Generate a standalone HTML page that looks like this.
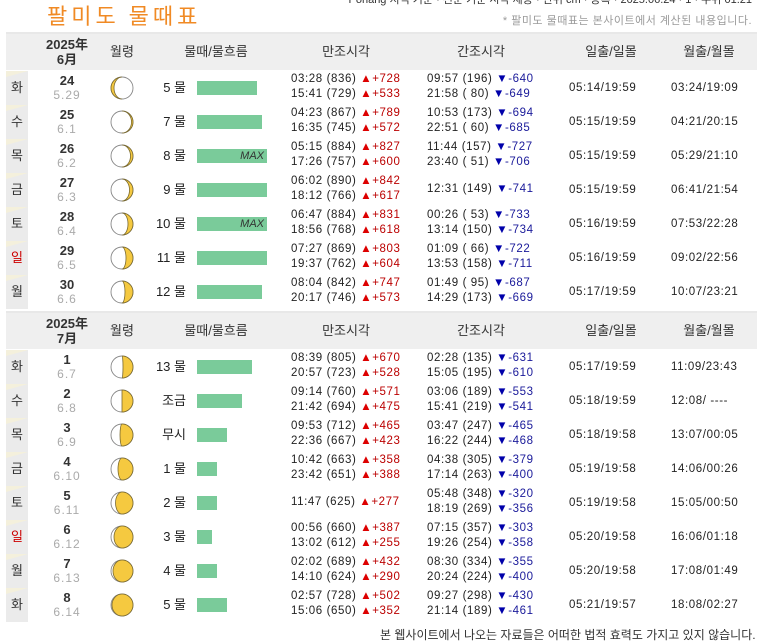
<!DOCTYPE html>
<html><head><meta charset="utf-8"><style>
*{margin:0;padding:0;box-sizing:border-box}
body{width:760px;height:633px;overflow:hidden;background:#fff;font-family:"Liberation Sans","Noto Sans CJK KR",sans-serif;color:#222;position:relative}
.title{position:absolute;left:47px;top:2px;font-size:22px;color:#f08a24;letter-spacing:4px;font-family:"Noto Sans CJK KR",sans-serif;line-height:26px}
.topcut{position:absolute;right:8px;top:-9px;font-size:11px;color:#333}
.note{position:absolute;right:8px;top:12px;font-size:11px;color:#9a9a9a;letter-spacing:.5px}
.line{position:absolute;left:6px;width:751px;height:2px;background:#e8e8e8}
.hdr{position:absolute;left:6px;width:751px;height:36px;background:#efefef;font-size:13px;color:#333}
.hdr div{position:absolute;top:0;height:36px;line-height:36px;text-align:center}
.hdr .ym{left:22px;width:78px;line-height:15px;top:3px;font-weight:bold;font-size:13px}
.row{position:absolute;left:6px;width:751px;height:34px;font-size:12px}
.d{position:absolute;left:0;top:0;width:22px;height:34px;background:#ebebeb;text-align:center;line-height:34px;font-size:13px;color:#333;overflow:hidden}
.d:before{content:"";position:absolute;left:0;top:0;border-left:22px solid #f4f0dc;border-bottom:6px solid transparent}
.d span{position:relative}
.red{color:#c00!important}
.dt{position:absolute;left:22px;width:78px;top:2px;text-align:center;line-height:15px}
.dt b{display:block;font-size:13px;color:#333}
.dt i{display:block;font-style:normal;color:#aaa;font-size:12px;letter-spacing:1px}
.mn{position:absolute;left:104px;top:5px;width:24px;height:24px}
.mt{position:absolute;left:126px;width:54px;top:0;line-height:34px;text-align:right;font-size:13px}
.bar{position:absolute;left:191px;top:10px;height:14px;background:#7acb9a;font-style:italic;font-size:11px;color:#333;text-align:right;line-height:14px;padding-right:3px}
.t{position:absolute;top:1px;line-height:15px;font-size:11.5px;white-space:pre;letter-spacing:.6px}
.t.s{top:9px}
.hi{left:285px}.lo{left:421px}
.u{color:#d00}.un{color:#b00}
.v{color:#00a}.vn{color:#1a1a9a}
.sun{position:absolute;left:563px;line-height:34px;font-size:11.5px;letter-spacing:.6px}
.moon{position:absolute;left:665px;line-height:34px;font-size:11.5px;letter-spacing:.6px}
.bot{position:absolute;left:380px;top:626px;font-size:12px;color:#333;white-space:nowrap}
</style></head><body>
<div class="topcut">Pohang 지역 기준 · 천문 기준 시각 제공 · 단위 cm · 등록 · 2025.06.24 · 1 · 수위 01:21</div>
<div class="title">팔미도 물때표</div>
<div class="note">* 팔미도 물때표는 본사이트에서 계산된 내용입니다.</div>
<div class="line" style="top:32px"></div>
<div class="hdr" style="top:34px"><div class="ym">2025年<br>6月</div><div style="left:100px;width:32px">월령</div><div style="left:150px;width:120px">물때/물흐름</div><div style="left:275px;width:130px">만조시각</div><div style="left:410px;width:130px">간조시각</div><div style="left:555px;width:100px">일출/일몰</div><div style="left:655px;width:96px">월출/월몰</div></div>

<!-- June -->
<div class="row" style="top:71px"><div class="d"><span>화</span></div><div class="dt"><b>24</b><i>5.29</i></div>
<svg class="mn" viewBox="0 0 24 24"><circle cx="12" cy="12" r="11" fill="#fff" stroke="#888" stroke-width=".9"/><path d="M12,1 A11,11 0 0 0 12,23 A8,11 0 0 1 12,1Z" fill="#f5c940" stroke="#7a6a30" stroke-width=".8"/></svg>
<div class="mt">5 물</div><div class="bar" style="width:60px"></div>
<div class="t hi">03:28 (836) <span class="u">▲</span><span class="un">+728</span>
15:41 (729) <span class="u">▲</span><span class="un">+533</span></div>
<div class="t lo">09:57 (196) <span class="v">▼</span><span class="vn">-640</span>
21:58 ( 80) <span class="v">▼</span><span class="vn">-649</span></div>
<div class="sun">05:14/19:59</div><div class="moon">03:24/19:09</div></div>

<div class="row" style="top:105px"><div class="d"><span>수</span></div><div class="dt"><b>25</b><i>6.1</i></div>
<svg class="mn" viewBox="0 0 24 24"><circle cx="12" cy="12" r="11" fill="#fff" stroke="#888" stroke-width=".9"/><path d="M12,1 A11,11 0 0 1 12,23 A9.5,11 0 0 0 12,1Z" fill="#f5c940" stroke="#7a6a30" stroke-width=".8"/></svg>
<div class="mt">7 물</div><div class="bar" style="width:65px"></div>
<div class="t hi">04:23 (867) <span class="u">▲</span><span class="un">+789</span>
16:35 (745) <span class="u">▲</span><span class="un">+572</span></div>
<div class="t lo">10:53 (173) <span class="v">▼</span><span class="vn">-694</span>
22:51 ( 60) <span class="v">▼</span><span class="vn">-685</span></div>
<div class="sun">05:15/19:59</div><div class="moon">04:21/20:15</div></div>

<div class="row" style="top:139px"><div class="d"><span>목</span></div><div class="dt"><b>26</b><i>6.2</i></div>
<svg class="mn" viewBox="0 0 24 24"><circle cx="12" cy="12" r="11" fill="#fff" stroke="#888" stroke-width=".9"/><path d="M12,1 A11,11 0 0 1 12,23 A8.5,11 0 0 0 12,1Z" fill="#f5c940" stroke="#7a6a30" stroke-width=".8"/></svg>
<div class="mt">8 물</div><div class="bar" style="width:70px">MAX</div>
<div class="t hi">05:15 (884) <span class="u">▲</span><span class="un">+827</span>
17:26 (757) <span class="u">▲</span><span class="un">+600</span></div>
<div class="t lo">11:44 (157) <span class="v">▼</span><span class="vn">-727</span>
23:40 ( 51) <span class="v">▼</span><span class="vn">-706</span></div>
<div class="sun">05:15/19:59</div><div class="moon">05:29/21:10</div></div>

<div class="row" style="top:173px"><div class="d"><span>금</span></div><div class="dt"><b>27</b><i>6.3</i></div>
<svg class="mn" viewBox="0 0 24 24"><circle cx="12" cy="12" r="11" fill="#fff" stroke="#888" stroke-width=".9"/><path d="M12,1 A11,11 0 0 1 12,23 A7.5,11 0 0 0 12,1Z" fill="#f5c940" stroke="#7a6a30" stroke-width=".8"/></svg>
<div class="mt">9 물</div><div class="bar" style="width:70px"></div>
<div class="t hi">06:02 (890) <span class="u">▲</span><span class="un">+842</span>
18:12 (766) <span class="u">▲</span><span class="un">+617</span></div>
<div class="t lo s">12:31 (149) <span class="v">▼</span><span class="vn">-741</span></div>
<div class="sun">05:15/19:59</div><div class="moon">06:41/21:54</div></div>

<div class="row" style="top:207px"><div class="d"><span>토</span></div><div class="dt"><b>28</b><i>6.4</i></div>
<svg class="mn" viewBox="0 0 24 24"><circle cx="12" cy="12" r="11" fill="#fff" stroke="#888" stroke-width=".9"/><path d="M12,1 A11,11 0 0 1 12,23 A6,11 0 0 0 12,1Z" fill="#f5c940" stroke="#7a6a30" stroke-width=".8"/></svg>
<div class="mt">10 물</div><div class="bar" style="width:70px">MAX</div>
<div class="t hi">06:47 (884) <span class="u">▲</span><span class="un">+831</span>
18:56 (768) <span class="u">▲</span><span class="un">+618</span></div>
<div class="t lo">00:26 ( 53) <span class="v">▼</span><span class="vn">-733</span>
13:14 (150) <span class="v">▼</span><span class="vn">-734</span></div>
<div class="sun">05:16/19:59</div><div class="moon">07:53/22:28</div></div>

<div class="row" style="top:241px"><div class="d"><span class="red">일</span></div><div class="dt"><b>29</b><i>6.5</i></div>
<svg class="mn" viewBox="0 0 24 24"><circle cx="12" cy="12" r="11" fill="#fff" stroke="#888" stroke-width=".9"/><path d="M12,1 A11,11 0 0 1 12,23 A4,11 0 0 0 12,1Z" fill="#f5c940" stroke="#7a6a30" stroke-width=".8"/></svg>
<div class="mt">11 물</div><div class="bar" style="width:70px"></div>
<div class="t hi">07:27 (869) <span class="u">▲</span><span class="un">+803</span>
19:37 (762) <span class="u">▲</span><span class="un">+604</span></div>
<div class="t lo">01:09 ( 66) <span class="v">▼</span><span class="vn">-722</span>
13:53 (158) <span class="v">▼</span><span class="vn">-711</span></div>
<div class="sun">05:16/19:59</div><div class="moon">09:02/22:56</div></div>

<div class="row" style="top:275px"><div class="d"><span>월</span></div><div class="dt"><b>30</b><i>6.6</i></div>
<svg class="mn" viewBox="0 0 24 24"><circle cx="12" cy="12" r="11" fill="#fff" stroke="#888" stroke-width=".9"/><path d="M12,1 A11,11 0 0 1 12,23 A3,11 0 0 0 12,1Z" fill="#f5c940" stroke="#7a6a30" stroke-width=".8"/></svg>
<div class="mt">12 물</div><div class="bar" style="width:65px"></div>
<div class="t hi">08:04 (842) <span class="u">▲</span><span class="un">+747</span>
20:17 (746) <span class="u">▲</span><span class="un">+573</span></div>
<div class="t lo">01:49 ( 95) <span class="v">▼</span><span class="vn">-687</span>
14:29 (173) <span class="v">▼</span><span class="vn">-669</span></div>
<div class="sun">05:17/19:59</div><div class="moon">10:07/23:21</div></div>

<div class="line" style="top:311px"></div>
<div class="hdr" style="top:313px"><div class="ym">2025年<br>7月</div><div style="left:100px;width:32px">월령</div><div style="left:150px;width:120px">물때/물흐름</div><div style="left:275px;width:130px">만조시각</div><div style="left:410px;width:130px">간조시각</div><div style="left:555px;width:100px">일출/일몰</div><div style="left:655px;width:96px">월출/월몰</div></div>

<!-- July -->
<div class="row" style="top:350px"><div class="d"><span>화</span></div><div class="dt"><b>1</b><i>6.7</i></div>
<svg class="mn" viewBox="0 0 24 24"><circle cx="12" cy="12" r="11" fill="#fff" stroke="#888" stroke-width=".9"/><path d="M12,1 A11,11 0 0 1 12,23 A1,11 0 0 0 12,1Z" fill="#f5c940" stroke="#7a6a30" stroke-width=".8"/></svg>
<div class="mt">13 물</div><div class="bar" style="width:55px"></div>
<div class="t hi">08:39 (805) <span class="u">▲</span><span class="un">+670</span>
20:57 (723) <span class="u">▲</span><span class="un">+528</span></div>
<div class="t lo">02:28 (135) <span class="v">▼</span><span class="vn">-631</span>
15:05 (195) <span class="v">▼</span><span class="vn">-610</span></div>
<div class="sun">05:17/19:59</div><div class="moon">11:09/23:43</div></div>

<div class="row" style="top:384px"><div class="d"><span>수</span></div><div class="dt"><b>2</b><i>6.8</i></div>
<svg class="mn" viewBox="0 0 24 24"><circle cx="12" cy="12" r="11" fill="#fff" stroke="#888" stroke-width=".9"/><path d="M12,1 A11,11 0 0 1 12,23 L12,1Z" fill="#f5c940" stroke="#7a6a30" stroke-width=".8"/></svg>
<div class="mt">조금</div><div class="bar" style="width:45px"></div>
<div class="t hi">09:14 (760) <span class="u">▲</span><span class="un">+571</span>
21:42 (694) <span class="u">▲</span><span class="un">+475</span></div>
<div class="t lo">03:06 (189) <span class="v">▼</span><span class="vn">-553</span>
15:41 (219) <span class="v">▼</span><span class="vn">-541</span></div>
<div class="sun">05:18/19:59</div><div class="moon">12:08/ ----</div></div>

<div class="row" style="top:418px"><div class="d"><span>목</span></div><div class="dt"><b>3</b><i>6.9</i></div>
<svg class="mn" viewBox="0 0 24 24"><circle cx="12" cy="12" r="11" fill="#fff" stroke="#888" stroke-width=".9"/><path d="M12,1 A11,11 0 0 1 12,23 A2,11 0 0 1 12,1Z" fill="#f5c940" stroke="#7a6a30" stroke-width=".8"/></svg>
<div class="mt">무시</div><div class="bar" style="width:30px"></div>
<div class="t hi">09:53 (712) <span class="u">▲</span><span class="un">+465</span>
22:36 (667) <span class="u">▲</span><span class="un">+423</span></div>
<div class="t lo">03:47 (247) <span class="v">▼</span><span class="vn">-465</span>
16:22 (244) <span class="v">▼</span><span class="vn">-468</span></div>
<div class="sun">05:18/19:58</div><div class="moon">13:07/00:05</div></div>

<div class="row" style="top:452px"><div class="d"><span>금</span></div><div class="dt"><b>4</b><i>6.10</i></div>
<svg class="mn" viewBox="0 0 24 24"><circle cx="12" cy="12" r="11" fill="#fff" stroke="#888" stroke-width=".9"/><path d="M12,1 A11,11 0 0 1 12,23 A4,11 0 0 1 12,1Z" fill="#f5c940" stroke="#7a6a30" stroke-width=".8"/></svg>
<div class="mt">1 물</div><div class="bar" style="width:20px"></div>
<div class="t hi">10:42 (663) <span class="u">▲</span><span class="un">+358</span>
23:42 (651) <span class="u">▲</span><span class="un">+388</span></div>
<div class="t lo">04:38 (305) <span class="v">▼</span><span class="vn">-379</span>
17:14 (263) <span class="v">▼</span><span class="vn">-400</span></div>
<div class="sun">05:19/19:58</div><div class="moon">14:06/00:26</div></div>

<div class="row" style="top:486px"><div class="d"><span>토</span></div><div class="dt"><b>5</b><i>6.11</i></div>
<svg class="mn" viewBox="0 0 24 24"><circle cx="12" cy="12" r="11" fill="#fff" stroke="#888" stroke-width=".9"/><path d="M12,1 A11,11 0 0 1 12,23 A6.5,11 0 0 1 12,1Z" fill="#f5c940" stroke="#7a6a30" stroke-width=".8"/></svg>
<div class="mt">2 물</div><div class="bar" style="width:20px"></div>
<div class="t hi s">11:47 (625) <span class="u">▲</span><span class="un">+277</span></div>
<div class="t lo">05:48 (348) <span class="v">▼</span><span class="vn">-320</span>
18:19 (269) <span class="v">▼</span><span class="vn">-356</span></div>
<div class="sun">05:19/19:58</div><div class="moon">15:05/00:50</div></div>

<div class="row" style="top:520px"><div class="d"><span class="red">일</span></div><div class="dt"><b>6</b><i>6.12</i></div>
<svg class="mn" viewBox="0 0 24 24"><circle cx="12" cy="12" r="11" fill="#fff" stroke="#888" stroke-width=".9"/><path d="M12,1 A11,11 0 0 1 12,23 A8,11 0 0 1 12,1Z" fill="#f5c940" stroke="#7a6a30" stroke-width=".8"/></svg>
<div class="mt">3 물</div><div class="bar" style="width:15px"></div>
<div class="t hi">00:56 (660) <span class="u">▲</span><span class="un">+387</span>
13:02 (612) <span class="u">▲</span><span class="un">+255</span></div>
<div class="t lo">07:15 (357) <span class="v">▼</span><span class="vn">-303</span>
19:26 (254) <span class="v">▼</span><span class="vn">-358</span></div>
<div class="sun">05:20/19:58</div><div class="moon">16:06/01:18</div></div>

<div class="row" style="top:554px"><div class="d"><span>월</span></div><div class="dt"><b>7</b><i>6.13</i></div>
<svg class="mn" viewBox="0 0 24 24"><circle cx="12" cy="12" r="11" fill="#fff" stroke="#888" stroke-width=".9"/><path d="M12,1 A11,11 0 0 1 12,23 A9,11 0 0 1 12,1Z" fill="#f5c940" stroke="#7a6a30" stroke-width=".8"/></svg>
<div class="mt">4 물</div><div class="bar" style="width:20px"></div>
<div class="t hi">02:02 (689) <span class="u">▲</span><span class="un">+432</span>
14:10 (624) <span class="u">▲</span><span class="un">+290</span></div>
<div class="t lo">08:30 (334) <span class="v">▼</span><span class="vn">-355</span>
20:24 (224) <span class="v">▼</span><span class="vn">-400</span></div>
<div class="sun">05:20/19:58</div><div class="moon">17:08/01:49</div></div>

<div class="row" style="top:588px"><div class="d"><span>화</span></div><div class="dt"><b>8</b><i>6.14</i></div>
<svg class="mn" viewBox="0 0 24 24"><circle cx="12" cy="12" r="11" fill="#fff" stroke="#888" stroke-width=".9"/><path d="M12,1 A11,11 0 0 1 12,23 A10,11 0 0 1 12,1Z" fill="#f5c940" stroke="#7a6a30" stroke-width=".8"/></svg>
<div class="mt">5 물</div><div class="bar" style="width:30px"></div>
<div class="t hi">02:57 (728) <span class="u">▲</span><span class="un">+502</span>
15:06 (650) <span class="u">▲</span><span class="un">+352</span></div>
<div class="t lo">09:27 (298) <span class="v">▼</span><span class="vn">-430</span>
21:14 (189) <span class="v">▼</span><span class="vn">-461</span></div>
<div class="sun">05:21/19:57</div><div class="moon">18:08/02:27</div></div>

<div class="bot">본 웹사이트에서 나오는 자료들은 어떠한 법적 효력도 가지고 있지 않습니다.</div>
</body></html>
